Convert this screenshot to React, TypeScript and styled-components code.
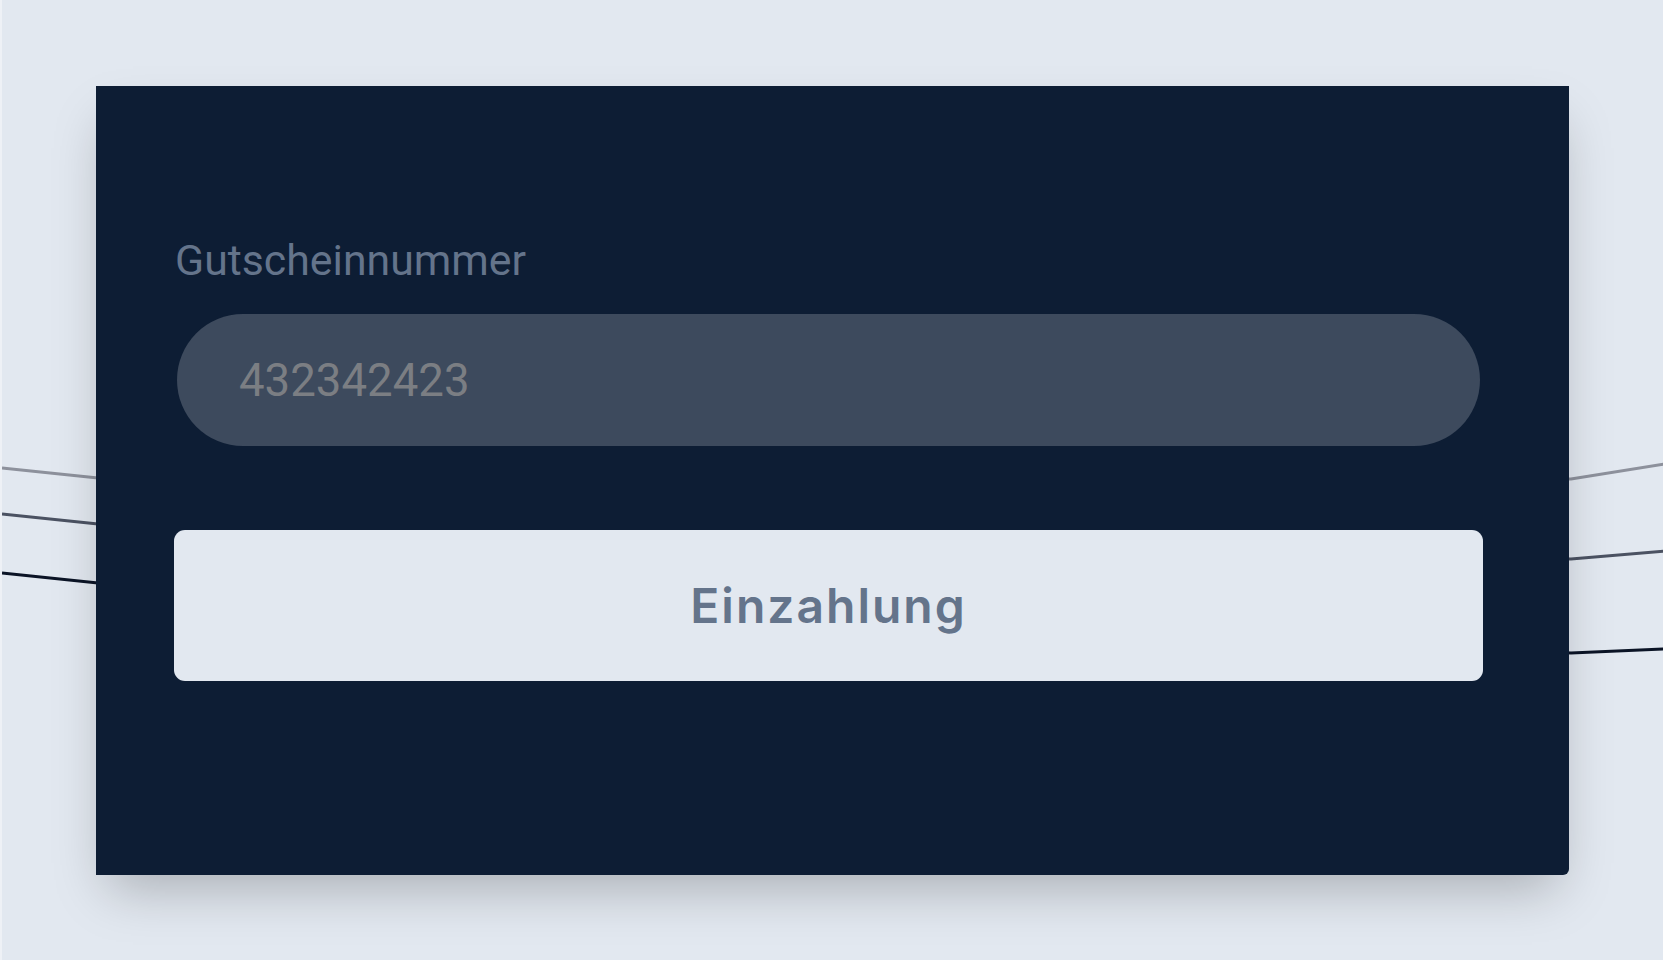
import React from "react";
import styled, { createGlobalStyle } from "styled-components";

const GlobalStyle = createGlobalStyle`
  * { box-sizing: border-box; }
  html, body { margin: 0; padding: 0; }
  body {
    background: #e2e8f0;
    font-family: Roboto, "Liberation Sans", sans-serif;
  }
`;

const Page = styled.div`
  position: relative;
  width: 1663px;
  height: 960px;
  overflow: hidden;
  background: #e2e8f0;
  border-left: 2px solid #eef1f6;
  padding: 86px 0 0 94px;
`;

const Decor = styled.svg`
  position: absolute;
  left: 0;
  top: 0;
  width: 1663px;
  height: 960px;
  z-index: 0;
  pointer-events: none;
`;

const Card = styled.section`
  position: relative;
  z-index: 1;
  width: 1473px;
  height: 789px;
  background: #0d1d34;
  border-radius: 0 0 6px 0;
  box-shadow: 0 25px 50px -12px rgba(0, 0, 0, 0.25);
  padding: 150px 86px 0 78px;
  display: flex;
  flex-direction: column;
`;

const Label = styled.label`
  display: block;
  margin: 0 0 29px 1px;
  font-family: Roboto, "Liberation Sans", sans-serif;
  font-size: 42.8px;
  line-height: 49px;
  font-weight: 400;
  color: #64748b;
`;

const Field = styled.input`
  display: block;
  margin: 0 3px 84px 3px;
  height: 132px;
  border: none;
  outline: none;
  border-radius: 66px;
  background: #3d4a5d;
  padding: 0 0 0 62px;
  font-family: Roboto, "Liberation Sans", sans-serif;
  font-size: 45.6px;
  color: #e2e8f0;

  &::placeholder {
    color: #7b7e83;
    opacity: 1;
  }
`;

const SubmitButton = styled.button`
  display: flex;
  align-items: center;
  justify-content: center;
  width: 100%;
  height: 151px;
  border: none;
  border-radius: 11px;
  background: #e2e8f0;
  font-family: Inter, "Noto Sans", sans-serif;
  font-size: 48px;
  font-weight: 600;
  letter-spacing: 2px;
  color: #64748b;
  cursor: pointer;
  padding: 0;
`;

export default function App() {
  return (
    <>
      <GlobalStyle />
      <Page>
        <Decor viewBox="0 0 1663 960" aria-hidden="true">
          <path d="M0 468 L96 478 L1569 479 L1663 464" fill="none" stroke="#8d919c" strokeWidth="3" />
          <path d="M0 514 L96 524 L1569 559 L1663 551" fill="none" stroke="#4b5262" strokeWidth="3" />
          <path d="M0 573 L96 583 L1569 653 L1663 649" fill="none" stroke="#0b1426" strokeWidth="3" />
        </Decor>
        <Card>
          <Label htmlFor="voucher">Gutscheinnummer</Label>
          <Field id="voucher" type="text" placeholder="432342423" />
          <SubmitButton type="button">Einzahlung</SubmitButton>
        </Card>
      </Page>
    </>
  );
}
